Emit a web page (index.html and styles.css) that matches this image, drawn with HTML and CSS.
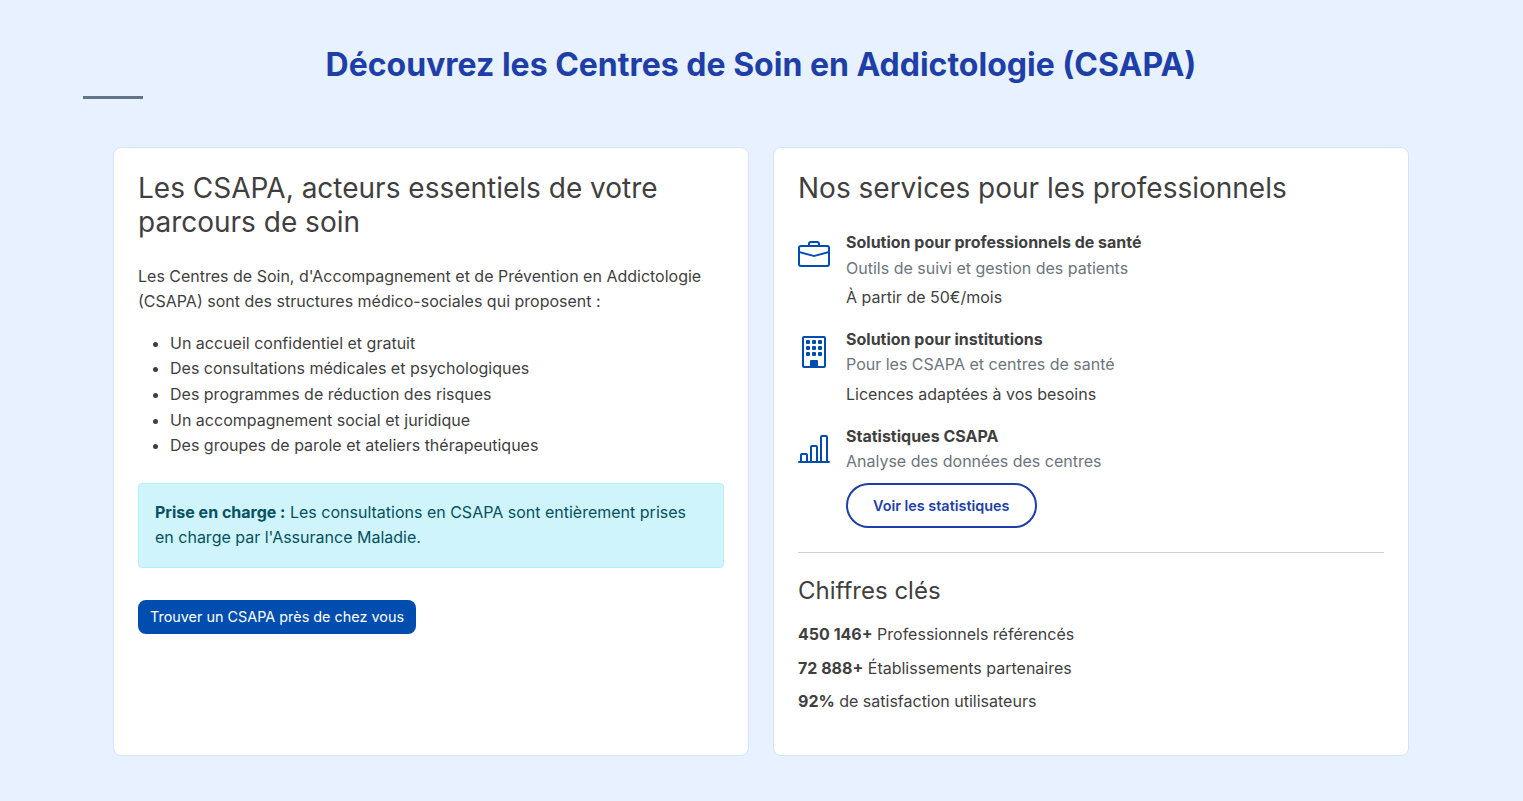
FILE: index.html
```html
<!DOCTYPE html>
<html lang="fr">
<head>
    <meta charset="UTF-8">
    <meta name="viewport" content="width=device-width, initial-scale=1.0">
    <title>Centres de Soin en Addictologie (CSAPA)</title>
    <link rel="stylesheet" href="styles.css">
</head>
<body>
    <section class="csapa">
        <h1 class="section-title">Découvrez les Centres de Soin en Addictologie (CSAPA)</h1>
        <div class="title-rule"></div>

        <div class="cards">
            <div class="card">
                <h2>Les CSAPA, acteurs essentiels de votre parcours de soin</h2>
                <p class="intro">Les Centres de Soin, d'Accompagnement et de Prévention en Addictologie (CSAPA) sont des structures médico-sociales qui proposent :</p>
                <ul class="offer-list">
                    <li>Un accueil confidentiel et gratuit</li>
                    <li>Des consultations médicales et psychologiques</li>
                    <li>Des programmes de réduction des risques</li>
                    <li>Un accompagnement social et juridique</li>
                    <li>Des groupes de parole et ateliers thérapeutiques</li>
                </ul>
                <div class="alert-info"><strong>Prise en charge :</strong> Les consultations en CSAPA sont entièrement prises en charge par l'Assurance Maladie.</div>
                <a href="#" class="btn-primary">Trouver un CSAPA près de chez vous</a>
            </div>

            <div class="card">
                <h2>Nos services pour les professionnels</h2>
                <div class="services">
                    <div class="service">
                        <svg class="service-icon" viewBox="0 0 16 16" fill="currentColor"><path d="M6.5 1A1.5 1.5 0 0 0 5 2.5V3H1.5A1.5 1.5 0 0 0 0 4.5v8A1.5 1.5 0 0 0 1.5 14h13a1.5 1.5 0 0 0 1.5-1.5v-8A1.5 1.5 0 0 0 14.5 3H11v-.5A1.5 1.5 0 0 0 9.5 1zm0 1h3a.5.5 0 0 1 .5.5V3H6v-.5a.5.5 0 0 1 .5-.5m1.886 6.914L15 7.151V12.5a.5.5 0 0 1-.5.5h-13a.5.5 0 0 1-.5-.5V7.15l6.614 1.764a1.5 1.5 0 0 0 .772 0M1.5 4h13a.5.5 0 0 1 .5.5v1.616L8.129 7.948a.5.5 0 0 1-.258 0L1 6.116V4.5a.5.5 0 0 1 .5-.5"/></svg>
                        <div>
                            <h3>Solution pour professionnels de santé</h3>
                            <p class="muted">Outils de suivi et gestion des patients</p>
                            <p class="price">À partir de 50€/mois</p>
                        </div>
                    </div>
                    <div class="service">
                        <svg class="service-icon" viewBox="0 0 16 16" fill="currentColor"><path d="M4 2.5a.5.5 0 0 1 .5-.5h1a.5.5 0 0 1 .5.5v1a.5.5 0 0 1-.5.5h-1a.5.5 0 0 1-.5-.5zm3 0a.5.5 0 0 1 .5-.5h1a.5.5 0 0 1 .5.5v1a.5.5 0 0 1-.5.5h-1a.5.5 0 0 1-.5-.5zm3.5-.5a.5.5 0 0 0-.5.5v1a.5.5 0 0 0 .5.5h1a.5.5 0 0 0 .5-.5v-1a.5.5 0 0 0-.5-.5zM4 5.5a.5.5 0 0 1 .5-.5h1a.5.5 0 0 1 .5.5v1a.5.5 0 0 1-.5.5h-1a.5.5 0 0 1-.5-.5zM7.5 5a.5.5 0 0 0-.5.5v1a.5.5 0 0 0 .5.5h1a.5.5 0 0 0 .5-.5v-1a.5.5 0 0 0-.5-.5zm2.5.5a.5.5 0 0 1 .5-.5h1a.5.5 0 0 1 .5.5v1a.5.5 0 0 1-.5.5h-1a.5.5 0 0 1-.5-.5zM4.5 8a.5.5 0 0 0-.5.5v1a.5.5 0 0 0 .5.5h1a.5.5 0 0 0 .5-.5v-1a.5.5 0 0 0-.5-.5zm2.5.5a.5.5 0 0 1 .5-.5h1a.5.5 0 0 1 .5.5v1a.5.5 0 0 1-.5.5h-1a.5.5 0 0 1-.5-.5zm3.5-.5a.5.5 0 0 0-.5.5v1a.5.5 0 0 0 .5.5h1a.5.5 0 0 0 .5-.5v-1a.5.5 0 0 0-.5-.5z"/><path d="M2 1a1 1 0 0 1 1-1h10a1 1 0 0 1 1 1v14a1 1 0 0 1-1 1H3a1 1 0 0 1-1-1zm11 0H3v14h3v-2.5a.5.5 0 0 1 .5-.5h3a.5.5 0 0 1 .5.5V15h3z"/></svg>
                        <div>
                            <h3>Solution pour institutions</h3>
                            <p class="muted">Pour les CSAPA et centres de santé</p>
                            <p class="price">Licences adaptées à vos besoins</p>
                        </div>
                    </div>
                    <div class="service">
                        <svg class="service-icon" viewBox="0 0 16 16" fill="currentColor"><path d="M11 2a1 1 0 0 1 1-1h2a1 1 0 0 1 1 1v12h.5a.5.5 0 0 1 0 1H.5a.5.5 0 0 1 0-1H1v-3a1 1 0 0 1 1-1h2a1 1 0 0 1 1 1v3h1V7a1 1 0 0 1 1-1h2a1 1 0 0 1 1 1v7h1zm1 12h2V2h-2zm-3 0V7H7v7zm-5 0v-3H2v3z"/></svg>
                        <div>
                            <h3>Statistiques CSAPA</h3>
                            <p class="muted">Analyse des données des centres</p>
                            <a href="#" class="btn-outline">Voir les statistiques</a>
                        </div>
                    </div>
                </div>
                <hr>
                <h2 class="small-title">Chiffres clés</h2>
                <p class="stat"><strong>450 146+</strong> Professionnels référencés</p>
                <p class="stat"><strong>72 888+</strong> Établissements partenaires</p>
                <p class="stat"><strong>92%</strong> de satisfaction utilisateurs</p>
            </div>
        </div>
    </section>
</body>
</html>
```

FILE: styles.css
```css
body {
    margin: 0;
    background-color: #e7f1ff;
    color: #3f3f3f;
    font-family: Inter, "Liberation Sans", sans-serif;
    font-size: 16px;
    line-height: 1.6;
}

a {
    text-decoration: none;
}

.csapa {
    padding: 46px 84px 45px 83px;
}

.section-title {
    margin: 0;
    color: #1e3ea8;
    font-size: 32px;
    font-weight: 700;
    line-height: 1.2;
    text-align: center;
}

.title-rule {
    width: 60px;
    height: 3px;
    margin: 12px 0 48px;
    background-color: #64748b;
}

.cards {
    display: grid;
    grid-template-columns: 1fr 1fr;
    gap: 24px;
    padding: 0 30px;
}

.card {
    padding: 24px 24px 32px;
    background-color: white;
    border: 1px solid #d6e4f5;
    border-radius: 8px;
}

.card h2 {
    margin: 0 0 24px;
    font-size: 28px;
    font-weight: 400;
    line-height: 1.2;
}

.intro {
    margin: 0 0 16px;
}

.offer-list {
    margin: 0 0 24px;
    padding-left: 32px;
}

.alert-info {
    margin-bottom: 32px;
    padding: 16px;
    background-color: #cff4fc;
    border: 1px solid #b6effb;
    border-radius: 4px;
    color: #055160;
}

.alert-info strong,
.service h3,
.stat strong {
    font-weight: 700;
}

.btn-primary {
    display: inline-block;
    padding: 6px 12px;
    background-color: #004db0;
    border-radius: 8px;
    color: white;
    font-size: 14.4px;
    line-height: 22px;
}

.services {
    display: flex;
    flex-direction: column;
    gap: 16px;
}

.service {
    display: flex;
    gap: 16px;
}

.service-icon {
    flex-shrink: 0;
    width: 32px;
    height: 32px;
    margin-top: 9px;
    color: #004db0;
}

.service h3 {
    margin: 0;
    font-size: 16px;
    line-height: 1.6;
}

.service p {
    margin: 0;
}

.muted {
    color: #6c757d;
}

.service .price {
    margin-top: 4px;
}

.btn-outline {
    display: inline-block;
    margin-top: 8px;
    padding: 9px 26px 9px 25px;
    border: 2px solid #1e3ea8;
    border-radius: 24px;
    color: #1e3ea8;
    font-size: 14.4px;
    font-weight: 600;
    line-height: 23px;
}

hr {
    margin: 24px 0;
    border: none;
    border-top: 1px solid #cfcfcf;
}

.card .small-title {
    margin-bottom: 16.4px;
    font-size: 24px;
}

.stat {
    margin: 0 0 8px;
}
```
